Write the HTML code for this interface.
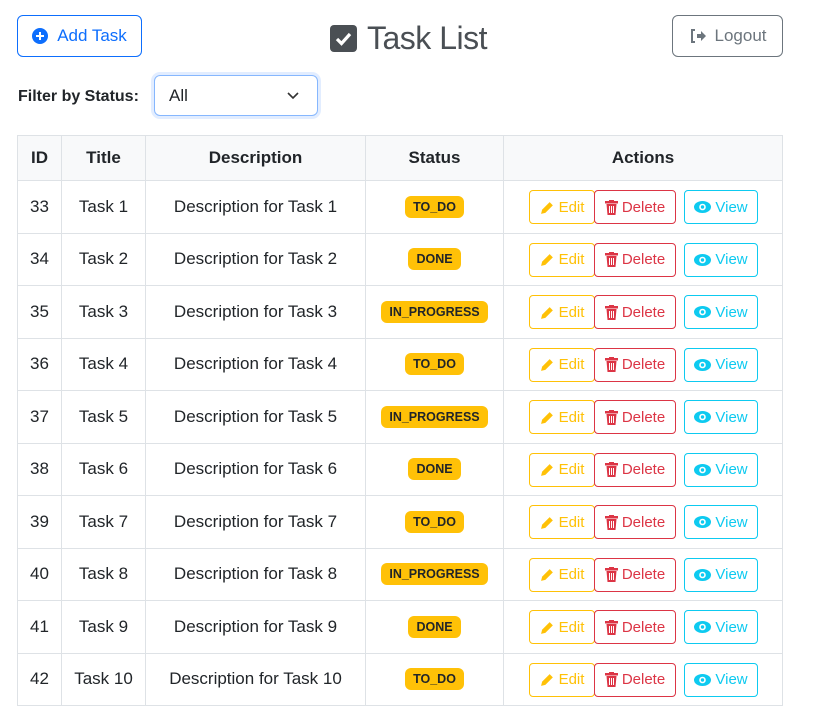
<!DOCTYPE html>
<html><head><meta charset="utf-8"><style>
*{box-sizing:border-box;margin:0;padding:0}
body{width:832px;height:721px;background:#fff;font-family:"Liberation Sans",sans-serif;color:#212529;position:relative;overflow:hidden}
.btn{position:absolute;border:1px solid;border-radius:6px;display:flex;align-items:center;justify-content:center;font-size:17px;background:#fff}
h1{position:absolute;left:330px;top:20px;font-size:32px;font-weight:500;color:#4a4f54;display:flex;align-items:center;gap:10px;letter-spacing:-0.5px}
.lbl{position:absolute;left:18px;top:88px;font-weight:bold;font-size:16px}
.sel{position:absolute;left:154px;top:75px;width:164px;height:41px;border:1px solid #86b7fe;border-radius:6px;box-shadow:0 0 0 3px rgba(13,110,253,.12);font-size:17px;padding:10px 14px}
table{position:absolute;left:17px;top:135px;border-collapse:collapse;width:766px;font-size:17px}
td,th{border:1px solid #dee2e6;text-align:center;padding:0;height:52.5px}
th{background:#f8f9fa;height:45px;font-weight:bold}
.bd{display:inline-block;background:#ffc107;color:#212529;font-weight:bold;font-size:12.5px;padding:4px 8px;border-radius:6px}
.act{position:relative}
.b{position:absolute;top:9px;height:34px;border:1px solid;border-radius:4px;font-size:15px;display:flex;align-items:center;justify-content:center;gap:4px}
.e{left:25px;width:66px;border-color:#ffc107;color:#ffc107}
.d{left:90px;width:82px;border-color:#dc3545;color:#dc3545}
.v{left:180px;width:74px;border-color:#0dcaf0;color:#0dcaf0}
</style></head><body>
<div class="btn" style="left:17px;top:15px;width:125px;height:42px;border-color:#0d6efd;color:#0d6efd"><svg width="16" height="16" viewBox="0 0 16 16" style="margin-right:9px"><circle cx="8" cy="8" r="8" fill="#0d6efd"/><path d="M8 4v8M4 8h8" stroke="#fff" stroke-width="2"/></svg>Add Task</div>
<h1><svg width="27" height="27" viewBox="0 0 27 27"><rect width="27" height="27" rx="4" fill="#4a4f54"/><path d="M7 14l4.5 4.5L20 9" stroke="#fff" stroke-width="3.2" fill="none"/></svg>Task List</h1>
<div class="btn" style="left:672px;top:15px;width:111px;height:42px;border-color:#6c757d;color:#6c757d"><svg width="18" height="16" viewBox="0 0 18 16" style="margin-right:8px"><path d="M6 2H3v12h3" stroke="#6c757d" stroke-width="2" fill="none"/><path d="M8 6h4V3l5 5-5 5v-3H8z" fill="#6c757d"/></svg>Logout</div>
<div class="lbl">Filter by Status:</div>
<div class="sel">All<svg style="position:absolute;right:18px;top:16px" width="12" height="8" viewBox="0 0 12 8"><path d="M1 1l5 5 5-5" stroke="#333" stroke-width="1.6" fill="none"/></svg></div>
<table>
<colgroup><col style="width:44px"><col style="width:84px"><col style="width:220px"><col style="width:138px"><col></colgroup>
<tr><th>ID</th><th>Title</th><th>Description</th><th>Status</th><th>Actions</th></tr>
<tbody id="tb"></tbody>
</table>
<script>
var st=["TO_DO","DONE","IN_PROGRESS","TO_DO","IN_PROGRESS","DONE","TO_DO","IN_PROGRESS","DONE","TO_DO"],h="";
var pen='<svg width="15" height="15" viewBox="0 0 14 14"><path d="M1 13l1-4 7-7 3 3-7 7z" fill="#ffc107"/></svg>';
var tr='<svg width="13" height="15" viewBox="0 0 13 15"><rect x="0" y="1" width="13" height="2.5" fill="#dc3545"/><rect x="4" y="0" width="5" height="2" fill="#dc3545"/><path d="M1.5 4h10l-1 11h-8z" fill="#dc3545"/><path d="M4.5 6v7M6.5 6v7M8.5 6v7" stroke="#fff" stroke-width="1"/></svg>';
var ey='<svg width="17" height="12" viewBox="0 0 17 12"><ellipse cx="8.5" cy="6" rx="8.5" ry="6" fill="#0dcaf0"/><circle cx="8.5" cy="6" r="3.3" fill="#fff"/><circle cx="8.5" cy="6" r="1.7" fill="#0dcaf0"/></svg>';
for(var i=0;i<10;i++){h+='<tr><td>'+(33+i)+'</td><td>Task '+(i+1)+'</td><td>Description for Task '+(i+1)+'</td><td><span class="bd">'+st[i]+'</span></td><td class="act"><div class="b e">'+pen+'Edit</div><div class="b d">'+tr+'Delete</div><div class="b v">'+ey+'View</div></td></tr>'}
document.getElementById("tb").innerHTML=h;
</script>
</body></html>
